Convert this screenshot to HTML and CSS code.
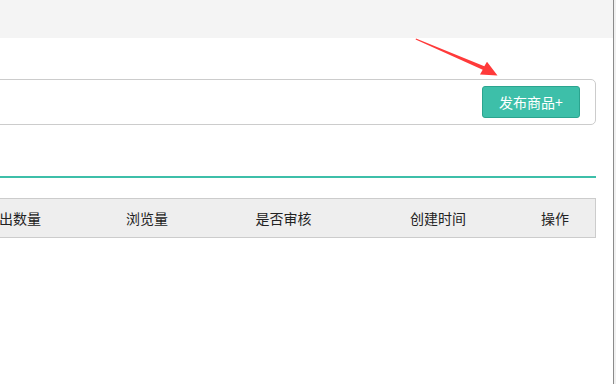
FILE: index.html
```html
<!DOCTYPE html>
<html lang="zh-CN">
<head>
    <meta charset="UTF-8">
    <title>商品管理</title>
    <link rel="stylesheet" href="styles.css">
</head>
<body>
    <div class="frame">
        <div class="page">
            <div class="topbar"></div>

            <div class="main">
                <div class="toolbar">
                    <a href="#" class="btn">发布商品+</a>
                </div>

                <div class="divider"></div>

                <div class="table-head">
                    <div class="cell">售出数量</div>
                    <div class="cell">浏览量</div>
                    <div class="cell">是否审核</div>
                    <div class="cell">创建时间</div>
                    <div class="cell">操作</div>
                </div>
            </div>
        </div>
        <div class="edge"></div>
    </div>

    <!-- annotation arrow pointing at the button -->
    <svg class="arrow" width="616" height="384" viewBox="0 0 616 384">
        <polygon points="416,38.6 484.3,66.2 487,61.8 497.5,75.5 480,74.5 482.7,69.8 415.6,39.4" fill="#ff3a3a"/>
    </svg>
</body>
</html>
```

FILE: styles.css
```css
* {
    margin: 0;
    padding: 0;
    box-sizing: border-box;
}

body {
    font-family: "Noto Sans CJK SC", "Noto Sans", sans-serif;
    font-size: 14px;
    color: #333;
    background: white;
    width: 616px;
    height: 384px;
    overflow: hidden;
}

.frame {
    display: flex;
    height: 384px;
}

.page {
    width: 613px;
    overflow: hidden;
}

.edge {
    flex: 1;
    background: #f0f0f0;
    border-left: 1px solid #8a8a8a;
}

.topbar {
    height: 38px;
    background: #f4f4f4;
}

.main {
    margin-left: -63px;
    padding-top: 41px;
    padding-right: 17px;
}

.toolbar {
    display: flex;
    justify-content: flex-end;
    border: 1px solid #ccc;
    border-radius: 5px;
    padding: 6px 15px;
}

.btn {
    display: flex;
    align-items: center;
    justify-content: center;
    width: 98px;
    height: 32px;
    background: #3dbfa9;
    border: 1px solid #2ba48f;
    border-radius: 3px;
    color: white;
    font-size: 14px;
    text-decoration: none;
}

.divider {
    height: 2px;
    background: #3dbfa9;
    margin-top: 51px;
}

.table-head {
    display: grid;
    grid-template-columns: 150px 118px 155px 154px 80px;
    height: 40px;
    margin-top: 20px;
    background: #eeeeee;
    border: 1px solid #ccc;
}

.cell {
    display: flex;
    align-items: center;
    justify-content: center;
    white-space: nowrap;
    color: #222;
}

.arrow {
    position: absolute;
    left: 0;
    top: 0;
    pointer-events: none;
}
```
